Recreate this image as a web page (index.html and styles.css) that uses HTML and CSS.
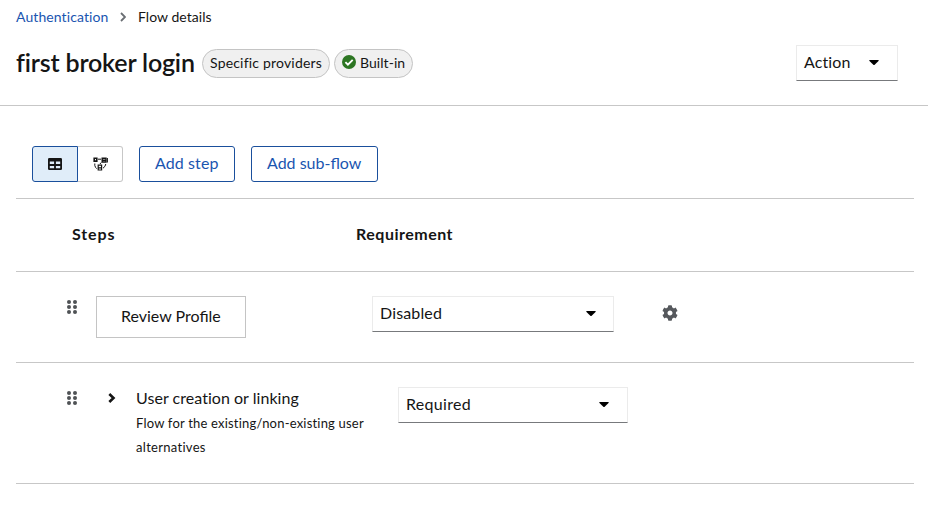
FILE: index.html
```html
<!DOCTYPE html>
<html lang="en">
<head>
<meta charset="utf-8">
<title>Flow details</title>
<link rel="stylesheet" href="styles.css">
</head>
<body>
<header class="page-header">
  <nav class="breadcrumb">
    <a class="crumb-link" href="#">Authentication</a>
    <svg class="crumb-chevron" width="6" height="10" viewBox="0 0 6 10"><path d="M1 1l4 4-4 4" fill="none" stroke="#6a6e73" stroke-width="1.8"/></svg>
    <span class="crumb-current">Flow details</span>
  </nav>
  <div class="title-row">
    <h1 class="title">first broker login</h1>
    <span class="label label-specific"><span class="t-specific">Specific providers</span></span>
    <span class="label label-builtin">
      <svg class="check" width="14" height="14" viewBox="0 0 14 14"><circle cx="7" cy="7" r="7" fill="#2d7623"/><path d="M3.4 7.2l2.500 2.500 4.800-4.900" fill="none" stroke="#fff" stroke-width="1.900"/></svg>
      <span class="t-builtin">Built-in</span>
    </span>
    <button class="select action"><span class="t-action">Action</span><svg class="caret" width="10" height="6" viewBox="0 0 10 6"><path d="M.8 0h8.4q1 .2.3 1L5.7 4.8q-.7.6-1.4 0L.5 1Q-.2.2.8 0z"/></svg></button>
  </div>
</header>
<main class="content">
  <div class="toolbar">
    <div class="toggle-group">
      <button class="toggle selected" aria-label="Table view"><svg width="14" height="12" viewBox="0 0 14 12"><path fill="#151515" fill-rule="evenodd" d="M1.300 0h11.400Q14 0 14 1.300v9.400q0 1.300-1.300 1.300H1.300Q0 12 0 10.700V1.300Q0 0 1.300 0zM1.800 3.500v2.500h4.300V3.500zM7.900 3.500v2.500h4.300V3.500zM1.800 7.900v2.400h4.300V7.900zM7.900 7.900v2.400h4.300V7.900z"/></svg></button>
      <button class="toggle" aria-label="Diagram view"><svg width="15" height="15" viewBox="0 0 15 15"><g fill="none" stroke="#151515"><path d="M1.200 1.300h2.600v2.800H1.200z" stroke-width="1.600"/><path d="M9.200 1.300h3.800v3.700H9.200zM9.500 3.200h3.500" stroke-width="1.400"/><path d="M5.200 8.200h3.400v4.800H5.200zM5.200 10.800h3.400" stroke-width="1.200"/><path d="M5 2.200h3M1.800 6.500v2q.5 2.200 2 3.200M12.800 7q-.3 2.600-2.800 4.200M8.200 5.500l-1.200 1.500M14.400 1v4.500" stroke-width="1"/></g></svg></button>
    </div>
    <button class="button add-step"><span class="t-step">Add step</span></button>
    <button class="button add-sub"><span class="t-sub">Add sub-flow</span></button>
  </div>
  <div class="table">
    <div class="row head"><strong class="t-steps">Steps</strong><strong class="t-req">Requirement</strong></div>
    <div class="row review">
      <svg class="grip" width="10" height="14" viewBox="0 0 10 14" fill="#4f5255"><circle cx="2" cy="2" r="2"/><circle cx="8" cy="2" r="2"/><circle cx="2" cy="7" r="2"/><circle cx="8" cy="7" r="2"/><circle cx="2" cy="12" r="2"/><circle cx="8" cy="12" r="2"/></svg>
      <div class="step-box"><span class="t-review">Review Profile</span></div>
      <button class="select disabled-select"><span class="t-disabled">Disabled</span><svg class="caret" width="10" height="6" viewBox="0 0 10 6"><path d="M.8 0h8.4q1 .2.3 1L5.7 4.8q-.7.6-1.4 0L.5 1Q-.2.2.8 0z"/></svg></button>
      <svg class="gear" width="16" height="16" viewBox="0 0 512 512"><path fill="#56595d" d="M487.400 315.700l-42.600-24.600c4.300-23.200 4.300-47 0-70.200l42.600-24.600c4.900-2.800 7.100-8.600 5.500-14-11.100-35.600-30-67.800-54.700-94.600-3.800-4.100-10-5.100-14.800-2.300L380.800 110c-17.900-15.400-38.500-27.300-60.800-35.100V25.800c0-5.600-3.900-10.500-9.400-11.700-36.700-8.200-74.300-7.800-109.200 0-5.500 1.200-9.400 6.100-9.400 11.700V75c-22.200 7.900-42.800 19.800-60.800 35.100L88.700 85.500c-4.900-2.800-11-1.900-14.800 2.300-24.700 26.700-43.600 58.900-54.700 94.600-1.700 5.400.6 11.200 5.500 14L67.300 221c-4.300 23.200-4.300 47 0 70.200l-42.600 24.600c-4.900 2.800-7.100 8.600-5.500 14 11.100 35.600 30 67.800 54.700 94.600 3.800 4.100 10 5.100 14.800 2.300l42.600-24.600c17.900 15.400 38.500 27.300 60.800 35.100v49.200c0 5.600 3.900 10.500 9.400 11.700 36.700 8.200 74.300 7.800 109.200 0 5.500-1.200 9.400-6.100 9.400-11.700v-49.200c22.200-7.900 42.800-19.800 60.800-35.100l42.600 24.600c4.900 2.800 11 1.900 14.800-2.300 24.700-26.700 43.600-58.900 54.700-94.600 1.500-5.500-.7-11.300-5.600-14.100zM256 336c-44.100 0-80-35.900-80-80s35.900-80 80-80 80 35.900 80 80-35.900 80-80 80z"/></svg>
    </div>
    <div class="row subflow">
      <svg class="grip" width="10" height="14" viewBox="0 0 10 14" fill="#4f5255"><circle cx="2" cy="2" r="2"/><circle cx="8" cy="2" r="2"/><circle cx="2" cy="7" r="2"/><circle cx="8" cy="7" r="2"/><circle cx="2" cy="12" r="2"/><circle cx="8" cy="12" r="2"/></svg>
      <svg class="expand" width="8" height="10" viewBox="0 0 8 10"><path d="M1.300 1l4.200 4-4.200 4" fill="none" stroke="#151515" stroke-width="2.600"/></svg>
      <div class="flow-text">
        <div class="flow-name"><span class="t-user">User creation or linking</span></div>
        <div class="flow-desc"><span class="t-desc">Flow for the existing/non-existing user</span><br><span class="t-alt">alternatives</span></div>
      </div>
      <button class="select required-select"><span class="t-required">Required</span><svg class="caret" width="10" height="6" viewBox="0 0 10 6"><path d="M.8 0h8.4q1 .2.3 1L5.7 4.8q-.7.6-1.4 0L.5 1Q-.2.2.8 0z"/></svg></button>
    </div>
  </div>
</main>
</body>
</html>
```
FILE: styles.css
```css
* { box-sizing: border-box; }
body {
  margin: 0;
  background: #fff;
  color: #151515;
  font: 16px/24px Lato, "Liberation Sans", sans-serif;
  letter-spacing: .3px;
  white-space: nowrap;
}
svg { flex: none; display: block; }
button { font: inherit; letter-spacing: inherit; color: inherit; padding: 0; }
.page-header { height: 106px; padding: 5px 30px 0 16px; border-bottom: 1px solid #c7c7c7; }
.breadcrumb { display: flex; align-items: center; height: 24px; font-size: 14px; }
.crumb-link { width: 92px; color: #1a55b0; text-decoration: none; letter-spacing: .09px; }
.crumb-current { letter-spacing: .05px; }
.crumb-chevron { margin: 0 12px; }
.title-row { display: flex; align-items: center; height: 36px; margin-top: 16px; }
.title { width: 186px; margin: 0; padding-bottom: 2px; font-size: 25px; line-height: 32px; font-weight: 600; letter-spacing: -.17px; }
.label {
  display: flex;
  align-items: center;
  height: 29px;
  padding: 0 7px;
  border: 1px solid #c4c4c4;
  border-radius: 15px;
  background: #f0f0f0;
  font-size: 14px;
}
.label-specific { width: 128px; letter-spacing: .19px; }
.label-builtin { width: 79px; margin-left: 4px; gap: 4px; letter-spacing: .05px; }
.check { margin-bottom: 2px; }
.select {
  display: flex;
  align-items: center;
  justify-content: space-between;
  height: 36px;
  padding: 0 17px 0 7px;
  border: 1px solid #ebebeb;
  border-bottom-color: #77797c;
  background: #fff;
}
.select span { padding-bottom: 2px; }
.action { width: 102px; margin-left: auto; padding-right: 18px; letter-spacing: .1px; }
.content { padding: 40px 14px 0 16px; }
.toolbar { display: flex; gap: 16px; height: 52px; padding: 0 16px; }
.toggle-group { display: flex; width: 91px; height: 36px; }
.toggle {
  display: grid;
  place-items: center;
  width: 45px;
  border: 1px solid #c7c7c7;
  border-left: 0;
  border-radius: 0 3px 3px 0;
  background: #fff;
}
.toggle.selected { width: 46px; border: 1px solid #1a4f9c; border-radius: 3px 0 0 3px; background: #e0edf9; }
.button { height: 36px; border: 1px solid #1a4f9c; border-radius: 3px; background: #fff; color: #1a55b0; text-align: left; padding: 0 0 2px 15px; }
.add-step { width: 96px; letter-spacing: .1px; }
.add-sub { width: 127px; letter-spacing: 0; }
.table { border-top: 1px solid #c7c7c7; }
.row { display: flex; align-items: flex-start; border-bottom: 1px solid #c7c7c7; }
.head { height: 73px; padding: 23px 0 0 56px; }
.t-steps { width: 284px; letter-spacing: .9px; }
.t-req { letter-spacing: .5px; }
.review { height: 91px; padding: 24px 0 0 51px; }
.grip { margin-top: 4px; }
.step-box { width: 150px; height: 42px; margin-left: 19px; padding: 7px 0 0 24px; border: 1px solid #c4c4c4; letter-spacing: 0; }
.disabled-select { width: 242px; margin-left: 126px; letter-spacing: .15px; }
.gear { margin: 9px 0 0 48px; }
.subflow { height: 121px; padding: 24px 0 0 51px; }
.expand { margin: 6px 0 0 31px; }
.flow-text { width: 262px; margin: -1px 0 0 20px; }
.flow-name { letter-spacing: .04px; }
.flow-desc { margin-top: 1px; font-size: 13px; }
.t-desc { letter-spacing: .2px; }
.required-select { width: 230px; padding-right: 18px; }
```
